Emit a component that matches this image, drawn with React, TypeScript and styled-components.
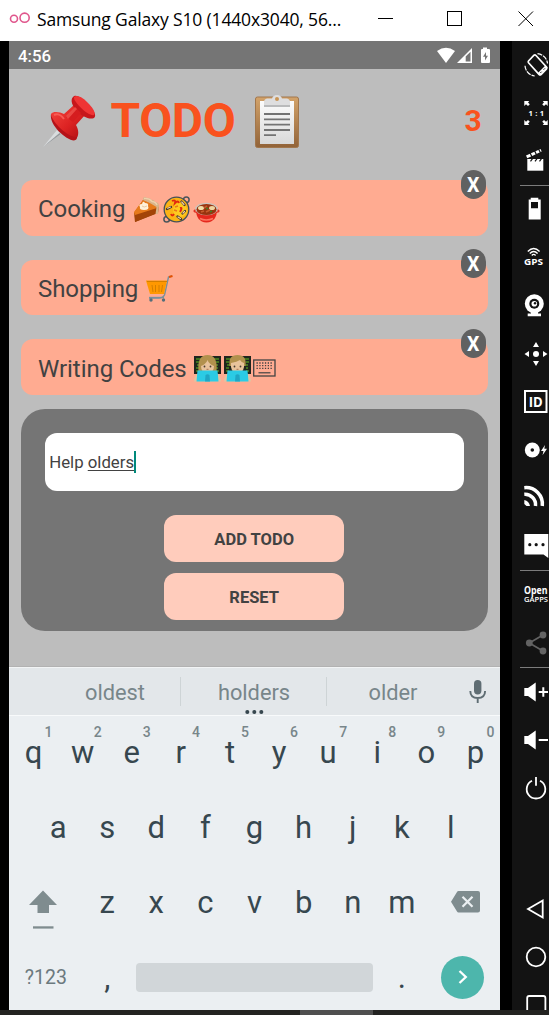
import React from 'react';
import styled, { createGlobalStyle } from 'styled-components';

const Global = createGlobalStyle`
  * { box-sizing: border-box; }
  body { margin: 0; background: #000; overflow: hidden; font-family: Roboto, "Noto Sans", sans-serif; }
  svg { display: block; flex: none; overflow: visible; }
  button { font-family: inherit; border: 0; padding: 0; }
`;

const Window = styled.div`
  width: 549px;
  height: 1015px;
  display: flex;
  flex-direction: column;
  background: #000;
  overflow: hidden;
`;

const TitleBar = styled.header`
  height: 41px;
  flex: none;
  display: flex;
  align-items: center;
  background: #fff;
  padding-left: 9px;
`;

const WindowTitle = styled.span`
  font: 17.5px/24px "Open Sans", "Noto Sans", sans-serif;
  letter-spacing: -0.16px;
  color: #000;
  white-space: nowrap;
  width: 341px;
  padding-left: 7px;
  margin-top: -3px;
`;

const Desktop = styled.div`
  flex: 1;
  min-height: 0;
  display: flex;
  justify-content: space-between;
  padding-left: 9px;
`;

const Phone = styled.main`
  width: 491px;
  display: flex;
  flex-direction: column;
  background: #bdbdbd;
`;

const StatusBar = styled.div`
  height: 28px;
  flex: none;
  display: flex;
  align-items: center;
  justify-content: space-between;
  padding: 1px 9px 0 9px;
  background: #757575;
  color: #fff;
  font-size: 16.8px;
  font-weight: 500;
`;

const AppBody = styled.section`
  height: 598px;
  flex: none;
  padding: 0 12.3px 0 11.7px;
  border-bottom: 1px solid #b2b2b2;
`;

const Heading = styled.div`
  height: 111px;
  display: flex;
  align-items: center;
  padding: 0 6px 8px 22.3px;
`;

const AppTitle = styled.h1`
  margin: 0 20px 0 13.5px;
  width: 125px;
  font-size: 48px;
  letter-spacing: -0.4px;
  line-height: 56px;
  font-weight: 700;
  color: #f9521e;
  white-space: nowrap;
`;

const Count = styled.span`
  margin-left: auto;
  font-size: 30px;
  font-weight: 700;
  color: #f9521e;
`;

const TodoList = styled.ul`
  list-style: none;
  margin: 0;
  padding: 0;
  display: flex;
  flex-direction: column;
  gap: 24px;
`;

const TodoItem = styled.li`
  position: relative;
  height: 55.6px;
  border-radius: 12px;
  background: #ffab91;
  display: flex;
  align-items: center;
  padding: 3.2px 17.3px 0;
  font-size: 24px;
  letter-spacing: -0.05px;
  color: #424242;
  white-space: pre;
`;

const EmojiRun = styled.span`
  display: flex;
  gap: 3px;
  margin-left: 7.3px;
`;

const CloseButton = styled.button`
  position: absolute;
  top: -10.5px;
  right: 2px;
  width: 25px;
  height: 29px;
  border-radius: 12.5px;
  background: #616161;
  color: #fff;
  font-size: 19.5px;
  font-weight: 700;
  line-height: 31px;
`;

const Form = styled.div`
  margin-top: 14.2px;
  height: 222.3px;
  border-radius: 24px;
  background: #757575;
  padding: 24px 24px 0;
  display: flex;
  flex-direction: column;
  align-items: center;
`;

const Field = styled.div`
  width: 100%;
  height: 58.2px;
  flex: none;
  margin-bottom: 24px;
  border-radius: 12px;
  background: #fff;
  padding-left: 4.5px;
  display: flex;
  align-items: center;
  white-space: pre;
  font-size: 16.8px;
  color: #424242;
`;

const Misspelt = styled.span`
  text-decoration: underline;
  text-decoration-thickness: 1px;
  text-underline-offset: 2px;
`;

const Caret = styled.span`
  width: 2px;
  height: 22px;
  background: #00897b;
`;

const ActionButton = styled.button`
  width: 180.5px;
  height: 46.5px;
  flex: none;
  margin-bottom: 11.7px;
  border-radius: 12px;
  background: #ffccbc;
  color: #424242;
  font-size: 16.5px;
  font-weight: 700;
  padding-top: 1.5px;
`;

const Keyboard = styled.section`
  flex: none;
  height: 343px;
  background: #ebeff2;
`;

const Suggestions = styled.div`
  height: 49px;
  display: flex;
  align-items: center;
  padding: 0 13px 0 40px;
  background: #e3e7ea;
  border-top: 1px solid #f2f4f5;
  border-bottom: 1px solid #f8fafb;
`;

const Suggestion = styled.div<{ $w: number; $rule?: boolean }>`
  position: relative;
  width: ${p => p.$w}px;
  height: 29px;
  line-height: 32px;
  text-align: center;
  text-indent: 1px;
  font-size: 21.8px;
  color: #78868a;
  border-right: ${p => (p.$rule ? '1px solid #ced4d6' : '0')};
`;

const MoreDots = styled.span`
  position: absolute;
  left: 50.5%;
  bottom: -7.5px;
  transform: translateX(-50%);
  display: flex;
  gap: 3px;
  i { width: 3.8px; height: 3.8px; border-radius: 50%; background: #37474f; }
`;

const MicSlot = styled.div`
  margin-left: auto;
`;

const KeyRow = styled.div<{ $last?: boolean }>`
  height: ${p => (p.$last ? 70 : 74.8)}px;
  display: flex;
  justify-content: center;
  align-items: center;
  padding-top: ${p => (p.$last ? 4 : 0)}px;
  padding-bottom: ${p => (p.$last ? 0 : 1)}px;
`;

const Key = styled.div<{ $wide?: boolean; $small?: boolean }>`
  position: relative;
  width: ${p => (p.$wide ? 73.65 : 49.1)}px;
  height: 40px;
  display: flex;
  align-items: center;
  justify-content: center;
  font-size: ${p => (p.$small ? 19.5 : 31)}px;
  color: ${p => (p.$small ? '#6b797e' : '#37474f')};
`;

const Hint = styled.sup`
  position: absolute;
  top: -9px;
  left: 50%;
  width: 30px;
  text-align: center;
  font-size: 14px;
  line-height: 16px;
  font-weight: 500;
  color: #78868a;
`;

const SpaceBar = styled.div`
  width: 237px;
  height: 29px;
  margin: 0 4.25px;
  border-radius: 4px;
  background: #d1d6d9;
`;

const EnterKey = styled.div`
  width: 43px;
  height: 43px;
  margin-right: 1px;
  border-radius: 50%;
  background: #4db6ac;
  display: flex;
  align-items: center;
  justify-content: center;
`;

const SideBar = styled.aside`
  width: 37px;
  background: #131313;
  overflow: hidden;
  padding-left: 8px;
`;

const Tool = styled.div`
  height: 48px;
  padding-left: 3px;
`;

const Rule = styled.div`
  height: 1px;
  background: #7c7c7c;
`;

const Gap = styled.div`
  height: 73px;
`;

const Taskbar = styled.footer`
  height: 5px;
  flex: none;
  background: #232321;
  padding-left: 300px;
`;

const TaskbarTab = styled.div`
  width: 73px;
  height: 5px;
  background: #4f4f4f;
`;

/* ---------- emoji drawings ---------- */

const Pushpin = () => (
  <svg width="54" height="54" viewBox="0 0 54 54">
    <defs>
      <linearGradient id="pin" x1="0" y1="0" x2="1" y2="1">
        <stop offset="0" stopColor="#f4473f" /><stop offset=".55" stopColor="#dc2222" /><stop offset="1" stopColor="#a90d12" />
      </linearGradient>
    </defs>
    <path d="M14 36L18 40L0 53Z" fill="#d9dcde" /><path d="M16.500 39L18 40L0 53Z" fill="#96999b" />
    <path d="M8 20C10 17 17 18 21 20L31 11L42 21L33 31C36 36 36 42 33 45C28 49 7 29 8 20Z" fill="url(#pin)" />
    <path d="M8 20C9 29 26 44 34 43Q34 46 31 46.500C23 46 6 31 8 20Z" fill="#b51218" />
    <path d="M30 3C33-1 40 5 45 10C51 16 54 22 51 24C46 26 39 22 35 18C29 12 27 6 30 3Z" fill="#c7161b" />
    <path d="M31 3C35 0 41 5 45 9C49 13 53 18 51 21C46 23 30 8 31 3Z" fill="#ef3434" />
    <path d="M23 23L32 13L38 19L30 28Z" fill="#d51d1f" /><path d="M23 22L32 13L34 15L25 25Z" fill="#fa6c61" opacity=".55" />
    <path d="M11 21C15 19 19 22 21 25" fill="none" stroke="#ff7269" strokeWidth="2" opacity=".65" />
  </svg>
);

const Clipboard = () => (
  <svg width="44" height="54" viewBox="0 0 44 54">
    <defs>
      <linearGradient id="board" x1="0" y1="0" x2="0" y2="1"><stop offset="0" stopColor="#d3a36a" /><stop offset="1" stopColor="#926338" /></linearGradient>
      <linearGradient id="paper" x1="0" y1="0" x2="0" y2="1"><stop offset="0" stopColor="#fcfcfc" /><stop offset="1" stopColor="#d9d9d9" /></linearGradient>
    </defs>
    <rect x=".5" y="3" width="43" height="50.500" rx="2" fill="url(#board)" stroke="#a1764c" />
    <path d="M5 7H39V50H5Z" fill="url(#paper)" />
    <path d="M9 20H35M9 25.300H35M9 30.600H35M9 36H35M9 41.200H21" stroke="#737373" strokeWidth="1.800" />
    <path d="M9 12.500V8Q9 5 12 4.500H17Q18 1 22 1T27 4.500H32Q35 5 35 8V12.500Z" fill="#dededf" />
    <path d="M9 11H35V13H9Z" fill="#b9babb" /><circle cx="22" cy="5" r="2" fill="#c99555" />
  </svg>
);

const Pie = () => (
  <svg width="27" height="27" viewBox="0 0 27 27">
    <path d="M1 17L10 4L26 10L25 17L2 26Z" fill="#9b4309" />
    <path d="M1 16L10 4L26 10L24 13L2 20Z" fill="#e67a1b" />
    <path d="M2 19L24 12L24 17L2 26Z" fill="#a34407" />
    <path d="M10 2Q12 0 14 2Q17 1 18 4Q21 3 22 6Q26 6 26 10L25 18L22.500 18L23.500 11Q18 7 10 4Z" fill="#d9b48b" />
    <path d="M11 2.500Q16 2 19 5.500Q23 6 24 9" fill="none" stroke="#efd1ac" strokeWidth="1.300" />
    <path d="M7 11Q5 8 9 8Q10 4 12 7Q16 7 15 10Q17 14 11 14Q6 14 7 11Z" fill="#fff1d8" />
    <path d="M9 10Q11 12 14 10" fill="none" stroke="#e7c9a4" />
  </svg>
);

const Paella = () => (
  <svg width="27" height="27" viewBox="0 0 27 27">
    <circle cx="23.300" cy="3.700" r="2.800" fill="none" stroke="#4b555a" strokeWidth="1.500" />
    <circle cx="3.700" cy="23.300" r="2.800" fill="none" stroke="#4b555a" strokeWidth="1.500" />
    <circle cx="13.500" cy="13.500" r="12.300" fill="#fbb315" stroke="#455056" strokeWidth="1.300" />
    <circle cx="17" cy="14" r="7" fill="#ffd023" opacity=".8" />
    <path d="M9 5Q13 3 12 7Q15 4 16 7M17 12Q20 11 17 16M8 18Q9 21 11 18" fill="none" stroke="#e1290f" strokeWidth="1.900" />
    <path d="M18.500 5.500L21.500 9M4 13L8 11M14.500 20.500L18 23M19.500 17.500L22 15" stroke="#42352e" strokeWidth="2.300" strokeLinecap="round" />
    <path d="M18.800 6L21 8.500M4.700 12.300L7.500 11M15 21L17.500 22.500M20 17L21.500 15.500" stroke="#f2cfa5" strokeWidth="1.200" strokeLinecap="round" />
    <path d="M12 11L15 10M11 14L14 15" stroke="#e9791a" strokeWidth="1.500" />
  </svg>
);

const Stew = () => (
  <svg width="27" height="27" viewBox="0 0 27 27">
    <ellipse cx="13.500" cy="15" rx="12.500" ry="2" fill="none" stroke="#dd3023" strokeWidth="1.400" />
    <path d="M3 13Q3 26 13.500 26.500Q24 26 24 13Z" fill="#e5281d" />
    <path d="M7 22.500Q13 25.500 20 22.500" fill="none" stroke="#ff7460" strokeWidth="1.500" />
    <ellipse cx="13.500" cy="13" rx="11.300" ry="6.300" fill="#c9c5be" />
    <ellipse cx="13.500" cy="13.500" rx="10" ry="5.500" fill="#98340f" />
    <ellipse cx="8" cy="12" rx="3" ry="2" fill="#f2dda7" /><ellipse cx="19" cy="12" rx="3" ry="2" fill="#efd4a0" />
    <path d="M11 12L14 10M13 16L17 14M8 16L11 15" stroke="#c65a2b" strokeWidth="1.800" />
    <path d="M13 12L15 13M17 16L19 15" stroke="#477b25" strokeWidth="1.400" />
  </svg>
);

const Cart = () => (
  <svg width="27" height="27" viewBox="0 0 27 27">
    <path d="M26 1L22.500 2L18.500 20Q17 23 13 23H3" fill="none" stroke="#78909c" strokeWidth="1.400" />
    <path d="M23 2L26.500 1" stroke="#e65100" strokeWidth="2" />
    <path d="M0 5.500H21L18 19H4Z" fill="#ff9800" />
    <path d="M1 6.500H21M6 10L7 17M9.500 10V17M13 10V17M16.500 10L15.500 17" stroke="#d47f00" strokeWidth="1" fill="none" />
    <path d="M3 22.500H18" stroke="#78909c" strokeWidth="1.300" />
    <circle cx="5" cy="25" r="1.700" fill="#546e7a" /><circle cx="17.500" cy="25" r="1.700" fill="#546e7a" />
  </svg>
);

const Coder = ({ long }: { long?: boolean }) => (
  <svg width="27" height="27" viewBox="0 0 27 27">
    <path d="M0 1H27V19H0Z" fill="#20261f" />
    <path d="M2 4H7M20 4H25M2 7H5M22 7H25M3 10H6M21 10H24M2 13H5M22 13H24M2 16H5M22 16H25" stroke="#62be22" strokeWidth="1.200" />
    <path d={long ? 'M4.500 16Q3 0 13.500 0T22.500 16Z' : 'M5.500 11Q4 0 13.500 0T21.500 11Z'} fill="#b2914d" />
    <path d={long ? 'M7 11Q12 9 13.500 5Q15 9 20 11Q20 18 13.500 18T7 11Z' : 'M7 8Q13 7 16 5Q18 8 20 8V12Q19 18 13.500 18T7 12Z'} fill="#e8c39c" />
    <circle cx="10.500" cy="11.500" r=".9" fill="#473d32" /><circle cx="16.500" cy="11.500" r=".9" fill="#473d32" />
    <path d="M12.500 14.300H14.500" stroke="#aa7558" />
    <path d="M0 26.500Q0 20 5 18H22Q27 20 27 26.500Z" fill="#e1c3a0" />
    <path d="M3.500 15.500H23.500L24.500 26.500H2.500Z" fill="#2bcbe5" />
    <path d="M11.500 20Q13.500 18.500 15.500 20L16 26.500H11Z" fill="#20a6c5" />
  </svg>
);

const KeyboardGlyph = () => (
  <svg width="24" height="27" viewBox="0 0 24 27">
    <rect x="-.3" y="5" width="21.300" height="16" fill="none" stroke="#424242" strokeWidth="1.300" />
    <path d="M2.500 8H18.500M2.500 10.700H18.500M2.500 13.400H18.500" stroke="#424242" strokeWidth="1.300" strokeDasharray="1.300 1.500" />
    <path d="M4.500 17.800H16.500" stroke="#424242" strokeWidth="1.200" />
  </svg>
);

/* ---------- emulator toolbar icons, drawn around y = 0 ---------- */

const ToolIcon = ({ children }: { children: React.ReactNode }) => (
  <Tool>
    <svg width="26" height="48" viewBox="0 -24 26 48" fill="#fff" fontFamily="Open Sans, Noto Sans, sans-serif">{children}</svg>
  </Tool>
);

const speaker = <path d="M1.300-4H5L12.700-9.500V9.500L5 4H1.300Z" />;

const mainTools = [
  <g fill="none" stroke="#fff">
    <path d="M5.500-4L11-9.800Q12-10.500 13-9.500L23.500 2Q24.200 3 23.500 4L18 9.500Q17 10.300 16 9.300L5.500-2.200Q4.800-3 5.500-4Z" strokeWidth="1.700" />
    <path d="M16 9L23.500 1.500" strokeWidth="3" /><path d="M17.300 8L18.600 6.700M20.500 4.800L22 3.300" stroke="#222" strokeWidth="1" />
    <path d="M14.500-11.300A11 11 0 0 1 24.500-1.500M2 .7A11 11 0 0 0 11.700 11" strokeWidth="1.200" strokeDasharray="5 1" />
  </g>,
  <>
    <path d="M1.300-12H6.300L5-10.500L6.800-8.700L5-7L3-8.700L1.300-7ZM24.700-12H19.700L21-10.500L19.200-8.700L21-7L23-8.700L24.700-7ZM1.300 12H6.300L5 10.500L6.800 8.700L5 7L3 8.700L1.300 7ZM24.700 12H19.700L21 10.500L19.200 8.700L21 7L23 8.700L24.700 7Z" />
    <text x="5.500" y="2.800" fontSize="7.500" fontWeight="700" textLength="15.500">1 : 1</text>
  </>,
  <>
    <path d="M4.300-2H20.300V9.700H4.300Z" /><path d="M3-5.500L17.500-12L18.700-9.500L4.300-2.800Z" />
    <path d="M7-8.300L9-4M11.500-10.300L13.500-6.200M15.500-12L17.500-8.200M7.500 .3L9.500-2.300M12 .3L14-2.300M16.500 .3L18.500-2.300" stroke="#131313" strokeWidth="1.200" />
  </>,
];

const deviceTools = [
  <path fillRule="evenodd" d="M7.700-12.300H15.300V-10.500H17.700V9.500H5.700V-10.500H7.700ZM8-8V-1.700H15V-8Z" />,
  <>
    <path d="M4.800-6.500Q10.700-12.500 16.600-6.500M6.800-4.500Q10.700-8.500 14.600-4.500M8.800-2.600Q10.700-4.600 12.600-2.600" fill="none" stroke="#fff" strokeWidth="1.400" />
    <text x="1" y="7" fontSize="8.800" fontWeight="700" textLength="19" lengthAdjust="spacingAndGlyphs">GPS</text>
  </>,
  <>
    <circle cx="11.300" cy="-2.300" r="9.500" /><circle cx="11.300" cy="-2.300" r="5" fill="#131313" />
    <circle cx="11.300" cy="-2.300" r="2.800" /><circle cx="12" cy="-2.800" r="1.200" fill="#131313" />
    <path d="M8 6H15V7.500H18V10.200H4.700V7.500H8Z" />
  </>,
  <>
    <circle cx="13" cy="0" r="3" />
    <path d="M13-12L16-7H10ZM13 12L16 7H10ZM1.500 0L6-3V3ZM24.500 0L20-3V3Z" />
  </>,
  <>
    <rect x="2" y="-11" width="21.500" height="21" fill="none" stroke="#fff" strokeWidth="2" />
    <text x="5.800" y="5" fontSize="15" fontWeight="700" textLength="14" lengthAdjust="spacingAndGlyphs">ID</text>
  </>,
  <>
    <circle cx="9.300" cy="0" r="7.500" /><circle cx="9.300" cy="0" r="1.800" fill="#131313" />
    <path d="M22-5L18 1H20.500L19.500 5.300L24-1.300H21.300Z" />
  </>,
  <>
    <path d="M1.300-10.300A16.500 16.500 0 0 1 19.300 8M1.300-3.700A10.500 10.500 0 0 1 12.500 8" fill="none" stroke="#fff" strokeWidth="3.500" />
    <path d="M1.300 2Q6 3 7 8H3.500L1.300 6Z" />
  </>,
  <>
    <path d="M1.300-12H25.300V12L20.500 8.500H1.300Z" />
    <g fill="#131313"><circle cx="6.800" cy="-1.300" r="1.600" /><circle cx="13.200" cy="-1.300" r="1.600" /><circle cx="20" cy="-1.300" r="1.600" /></g>
  </>,
];

const shareTools = [
  <>
    <text x="1" y="-1.200" fontSize="10.500" fontWeight="700" textLength="23.500" lengthAdjust="spacingAndGlyphs">Open</text>
    <text x="1" y="7.300" fontSize="7.500" fontWeight="600" textLength="24" lengthAdjust="spacingAndGlyphs">GAPPS</text>
  </>,
  <g fill="#636363">
    <path d="M20-8L6.300 0L20 8" fill="none" stroke="#636363" strokeWidth="1.700" />
    <circle cx="6.300" cy="0" r="3.400" /><circle cx="20" cy="-8" r="3.400" /><circle cx="20" cy="8" r="3.400" />
  </g>,
];

const powerTools = [
  <>{speaker}<path d="M15.700 0H25M20.300-4.700V4.700" stroke="#fff" strokeWidth="2" /></>,
  <>{speaker}<path d="M15.700 0H25" stroke="#fff" strokeWidth="2" /></>,
  <path d="M9-7.200A9.300 9.300 0 1 0 17-7.200M13-11V-2.300" fill="none" stroke="#fff" strokeWidth="1.800" />,
];

const navTools = [
  <path d="M5 0L19.700-8.500V8.500Z" fill="none" stroke="#fff" strokeWidth="1.800" />,
  <circle cx="13" cy="0" r="9.300" fill="none" stroke="#fff" strokeWidth="1.800" />,
  <rect x="4.200" y="-9" width="18.200" height="18" rx="2" fill="none" stroke="#fff" strokeWidth="1.800" />,
];

const renderTools = (icons: React.ReactNode[]) => icons.map((icon, i) => <ToolIcon key={i}>{icon}</ToolIcon>);

const todos = [
  { label: 'Cooking', art: <><Pie /><Paella /><Stew /></> },
  { label: 'Shopping', art: <Cart /> },
  { label: 'Writing Codes', art: <><Coder long /><Coder /><KeyboardGlyph /></> },
];

export default function App() {
  return (
    <Window>
      <Global />
      <TitleBar>
        <svg width="21" height="41" viewBox="0 0 21 41" fill="none" stroke="#e0568c" strokeWidth="1.600">
          <circle cx="5" cy="18.700" r="3.500" /><circle cx="15.600" cy="17.700" r="4.600" />
        </svg>
        <WindowTitle>Samsung Galaxy S10 (1440x3040, 56...</WindowTitle>
        <svg width="178" height="41" viewBox="371 0 178 41" fill="none" stroke="#000">
          <path d="M378 18.500H393" /><rect x="447.500" y="11.500" width="14" height="14" /><path d="M518.500 11.500L533 26M533 11.500L518.500 26" />
        </svg>
      </TitleBar>
      <Desktop>
        <Phone>
          <StatusBar>
            4:56
            <svg width="54" height="18" viewBox="0 0 54 18" fill="#fff">
              <path d="M0 4Q9-2.500 18 4L9 16Z" />
              <path d="M20 16L35 1V16Z" /><path d="M28.700 9.500L33.500 4.700V14.500H28.700Z" fill="#757575" />
              <path d="M46 .500H50V2H52Q53 2 53 3V15Q53 16 52 16H45Q44 16 44 15V3Q44 2 45 2H46Z" />
              <path d="M49 5L46 9.700H48V13.500L51 8.700H49Z" fill="#757575" />
            </svg>
          </StatusBar>
          <AppBody>
            <Heading>
              <Pushpin />
              <AppTitle>TODO</AppTitle>
              <Clipboard />
              <Count>3</Count>
            </Heading>
            <TodoList>
              {todos.map(t => (
                <TodoItem key={t.label}>
                  {t.label}
                  <EmojiRun>{t.art}</EmojiRun>
                  <CloseButton>X</CloseButton>
                </TodoItem>
              ))}
            </TodoList>
            <Form>
              <Field>Help <Misspelt>olders</Misspelt><Caret /></Field>
              <ActionButton>ADD TODO</ActionButton>
              <ActionButton>RESET</ActionButton>
            </Form>
          </AppBody>
          <Keyboard>
            <Suggestions>
              <Suggestion $w={132} $rule>oldest</Suggestion>
              <Suggestion $w={146} $rule>holders<MoreDots><i /><i /><i /></MoreDots></Suggestion>
              <Suggestion $w={131}>older</Suggestion>
              <MicSlot>
                <svg width="18" height="24" viewBox="0 0 18 24">
                  <rect x="5" y="0" width="7.400" height="14.500" rx="3.700" fill="#5f6d73" />
                  <path d="M1.300 11Q1.300 18 8.700 18T16.100 11M8.700 18V23" fill="none" stroke="#5f6d73" strokeWidth="1.900" />
                </svg>
              </MicSlot>
            </Suggestions>
            <KeyRow>
              {[...'qwertyuiop'].map((k, i) => <Key key={k}>{k}<Hint>{(i + 1) % 10}</Hint></Key>)}
            </KeyRow>
            <KeyRow>{[...'asdfghjkl'].map(k => <Key key={k}>{k}</Key>)}</KeyRow>
            <KeyRow>
              <Key $wide>
                <svg width="34" height="40" viewBox="0 0 34 40" fill="#7f8c8f">
                  <path d="M14 8.500L28 23H20V31H8.500V23H0Z" />
                  <path d="M4 44.300H24.500V46.600H4Z" />
                </svg>
              </Key>
              {[...'zxcvbnm'].map(k => <Key key={k}>{k}</Key>)}
              <Key $wide>
                <svg width="25" height="22" viewBox="0 0 25 22">
                  <path d="M7.500 0H27Q29 0 29 2V19.500Q29 21.500 27 21.500H7.500Q6.500 21.500 6 20.500L0 10.700L6 1Q6.500 0 7.500 0Z" fill="#7f8c8f" />
                  <path d="M11.500 5.700L21.500 15.800M21.500 5.700L11.500 15.800" stroke="#ebeff2" strokeWidth="2.200" />
                </svg>
              </Key>
            </KeyRow>
            <KeyRow $last>
              <Key $wide $small>?123</Key>
              <Key>,</Key>
              <SpaceBar />
              <Key>.</Key>
              <Key $wide>
                <EnterKey>
                  <svg width="10" height="14" viewBox="0 0 10 14"><path d="M1.500 1L7.800 7L1.500 13" fill="none" stroke="#fff" strokeWidth="2.300" /></svg>
                </EnterKey>
              </Key>
            </KeyRow>
          </Keyboard>
        </Phone>
        <SideBar>
          {renderTools(mainTools)}
          <Rule />
          {renderTools(deviceTools)}
          <Rule />
          {renderTools(shareTools)}
          <Rule />
          {renderTools(powerTools)}
          <Gap />
          {renderTools(navTools)}
        </SideBar>
      </Desktop>
      <Taskbar><TaskbarTab /></Taskbar>
    </Window>
  );
}
